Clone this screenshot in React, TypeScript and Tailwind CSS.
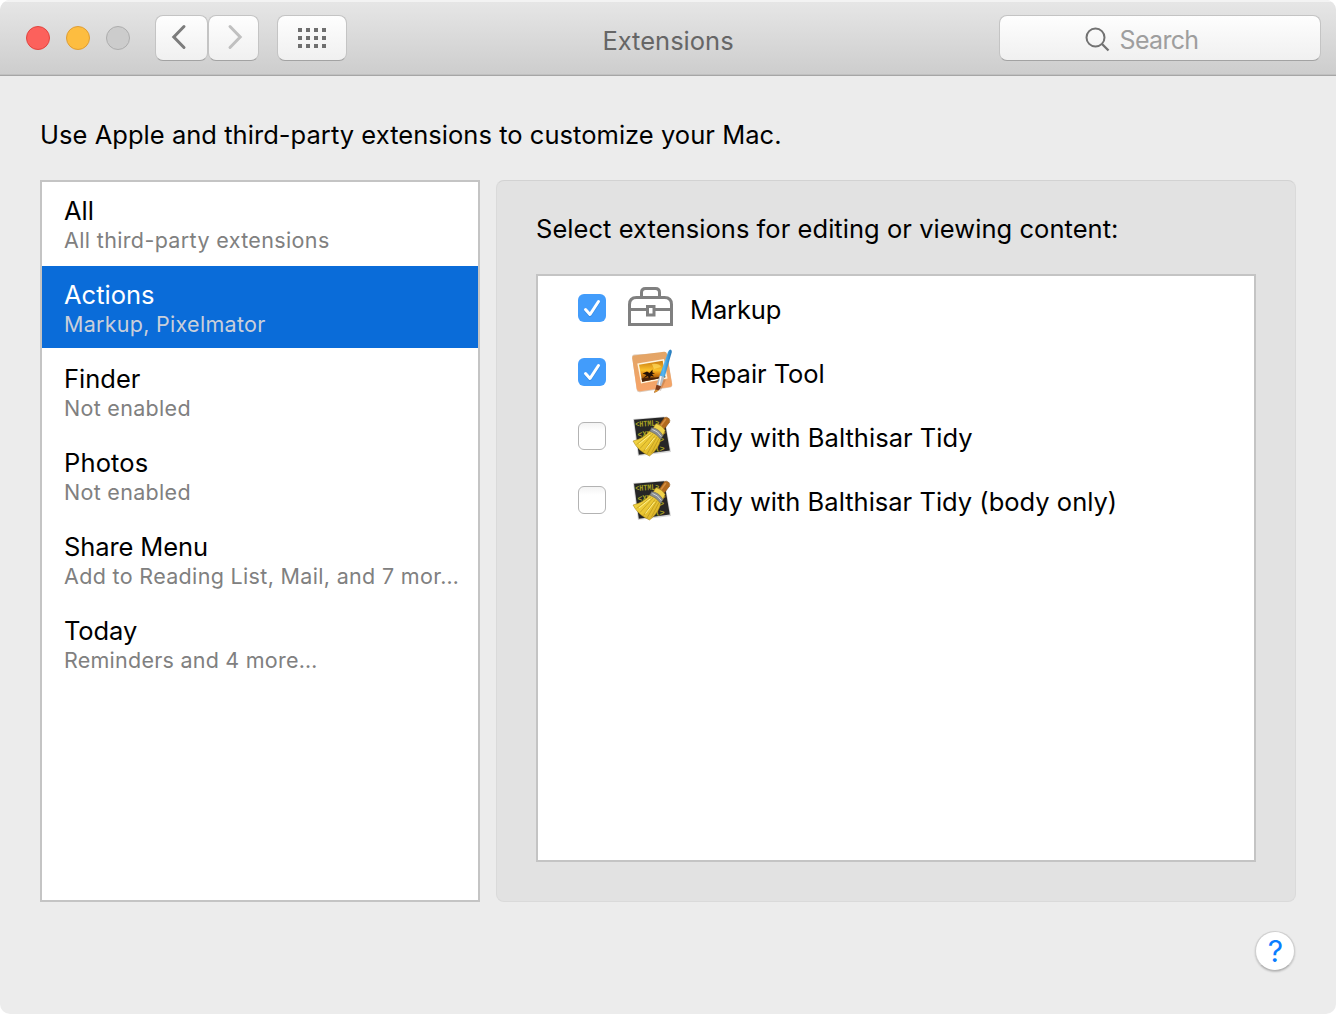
import React from 'react';

type Category = { title: string; detail: string; tt: string; dt: string; selected?: boolean };

const categories: Category[] = [
  { title: 'All', detail: 'All third-party extensions', tt: 'tracking-[0px]', dt: 'tracking-[0.36px]' },
  { title: 'Actions', detail: 'Markup, Pixelmator', tt: 'tracking-[0px]', dt: 'tracking-[0.28px]', selected: true },
  { title: 'Finder', detail: 'Not enabled', tt: 'tracking-[0px]', dt: 'tracking-[0.3px]' },
  { title: 'Photos', detail: 'Not enabled', tt: 'tracking-[0.15px]', dt: 'tracking-[0.3px]' },
  { title: 'Share Menu', detail: 'Add to Reading List, Mail, and 7 mor…', tt: 'tracking-[-0.1px]', dt: 'tracking-[0.33px]' },
  { title: 'Today', detail: 'Reminders and 4 more…', tt: 'tracking-[-0.1px]', dt: 'tracking-[0.24px]' },
];

function ToolboxIcon() {
  return (
    <svg width="46" height="44" viewBox="0 0 46 44" fill="none" stroke="#808080" strokeWidth="3">
      <path d="M13.500 10V6.500Q13.500 2.500 17.500 2.500H27.500Q31.500 2.500 31.500 6.500V10" />
      <path d="M1.500 38.500V18.500Q1.500 11.500 8.500 11.500H36.500Q43.500 11.500 43.500 18.500V38.500Z" />
      <path d="M1.500 23.500H18.500M27 23.500H43.500" />
      <rect x="19.500" y="20.500" width="6.500" height="8.500" />
    </svg>
  );
}

function PixelmatorIcon() {
  return (
    <svg width="46" height="46" viewBox="0 0 46 46">
      <defs>
        <linearGradient id="frame" x1="0" y1="0" x2="0" y2="1">
          <stop offset="0" stopColor="#e2a566" />
          <stop offset="1" stopColor="#f7a468" />
        </linearGradient>
        <linearGradient id="sunset" x1="0" y1="0" x2="0" y2="1">
          <stop offset="0" stopColor="#c97a10" />
          <stop offset="0.450" stopColor="#fbc22c" />
          <stop offset="0.620" stopColor="#e08a12" />
          <stop offset="1" stopColor="#6b2f08" />
        </linearGradient>
        <linearGradient id="brush" x1="0" y1="0" x2="1" y2="0.300">
          <stop offset="0" stopColor="#1d7fcb" />
          <stop offset="0.500" stopColor="#58b8f2" />
          <stop offset="1" stopColor="#1669ad" />
        </linearGradient>
      </defs>
      <path d="M6 5.500L36 4Q38.500 3.700 39.300 6L44.300 35.500Q44.500 38.200 42 38.600L12 43.300Q9.300 43.600 8.700 40.900L4.200 8.200Q3.900 5.800 6 5.500Z" fill="#9c6a3b" opacity="0.35" />
      <path d="M6 6.500L36 2.800Q38.500 2.500 39 5L44 35Q44.200 37.700 41.700 38L12 42.200Q9.300 42.500 8.700 39.800L4.200 9.200Q3.900 6.800 6 6.500Z" fill="url(#frame)" />
      <path d="M9.300 14.500L36 10L39.500 29.500L13 34.500Z" fill="#fff4dc" />
      <path d="M11 15.800L34.700 11.800L37.300 28.300L14.200 32.700Z" fill="url(#sunset)" />
      <path d="M24 15q7 -1 9 3l-7 2z" fill="#ffdb5c" opacity="0.7" />
      <path d="M14.200 32.700L13.600 29.500L20 28.500L28 28.500L37 26.500L37.300 28.300Z" fill="#4a2409" />
      <path d="M14.500 24.500L19 22.500L21.500 24L24.500 20.500L24.500 23.500L27 24.500L24 25L26 27.500L23 27L21 30L20 27L15 29.500L18.500 26Z" fill="#241207" />
      <path d="M35.500 30L30.500 41" stroke="#714023" strokeOpacity="0.250" strokeWidth="5" />
      <path d="M42.300 0.500Q44 0.700 43.800 3L36.500 28.500L31.600 27L40 3Q41 0.500 42.300 0.500Z" fill="url(#brush)" />
      <path d="M31.600 26.500L36.500 28L33 37.500L28.500 36Z" fill="#b8bfc6" />
      <path d="M33 27L31 36.600" stroke="#fff" strokeWidth="1.200" />
      <path d="M28.500 35.700L33 37.300Q31.500 42.500 26 43.800Q27.500 41 28.500 35.700Z" fill="#7b3c1d" />
      <path d="M27.500 40.500L30.600 41.300Q29 43.300 26 43.800Z" fill="#d99538" />
    </svg>
  );
}

function TidyIcon() {
  return (
    <svg width="46" height="46" viewBox="0 0 46 46">
      <defs>
        <linearGradient id="straw" x1="0" y1="0" x2="1" y2="1">
          <stop offset="0" stopColor="#f6de52" />
          <stop offset="0.500" stopColor="#ecc833" />
          <stop offset="1" stopColor="#d2a822" />
        </linearGradient>
      </defs>
      <path d="M5 6L36.500 3.500L43 39L10 43Z" fill="#bcbcbc" opacity="0.6" />
      <path d="M6 6.800L36 4.200L41.800 37.500L10.800 41.800Z" fill="#262626" />
      <g fill="#aaa422" fontFamily="Liberation Mono" fontWeight="700" fontSize="8.500" transform="rotate(-4 8 14)">
        <text x="7.500" y="14" textLength="24" lengthAdjust="spacingAndGlyphs">{'<HTML>'}</text>
        <text x="9" y="24.500" textLength="28" lengthAdjust="spacingAndGlyphs">{'<XML/>'}</text>
        <text x="30" y="31">{'>'}</text>
        <text x="25" y="40">{'l>'}</text>
      </g>
      <path d="M36.500 4.500Q38.500 3.500 40.500 5.200Q42.800 7.200 41.500 9.200L35.500 17L30.500 13Z" fill="#b26a1d" stroke="#7c4a14" strokeWidth="0.500" />
      <path d="M37.800 6L33 12.500" stroke="#d48f42" strokeWidth="1.500" />
      <path d="M28 10.500Q34 12 37.200 17.500L34.500 23.500L24.500 16Z" fill="#f0d24a" stroke="#8f7016" strokeWidth="0.500" />
      <path d="M22 17.500Q29 19 32.800 26Q31 36 21.500 43Q10 38 5 28Q16 25.500 22 17.500Z" fill="url(#straw)" stroke="#9c7c14" strokeWidth="0.500" />
      <path d="M23 20L8.500 31.500M25 21L12 35.500M27 22.500L15.500 38.500M29 24L19 41M31 25.500L23.500 40" stroke="#8d6a0b" strokeWidth="0.800" fill="none" opacity="0.450" />
      <path d="M22 22L11 31M26.500 25L17.500 36.500" stroke="#fff08c" strokeWidth="1" />
      <path d="M23.500 14.500Q31 15.500 35 22.500L32.800 26.500Q28 20 21.800 18.300Z" fill="#8a8e91" stroke="#505152" strokeWidth="0.500" />
      <path d="M24.500 16.500Q30 18 33.300 23.500" stroke="#cfd2d4" strokeWidth="1" fill="none" />
    </svg>
  );
}

function Checkbox({ checked }: { checked: boolean }) {
  if (!checked) {
    return (
      <span className="block h-7 w-7 rounded-[6px] border border-[#b3b3b3] bg-linear-to-b from-[#f3f3f3] via-white via-30% to-white" />
    );
  }
  return (
    <span className="block h-7 w-7 rounded-[6px] bg-[#429cfb]">
      <svg width="28" height="28" viewBox="0 0 28 28" fill="none" strokeLinecap="round" strokeLinejoin="round">
        <path d="M7.500 16.500L12 21.700L20.700 8.500" stroke="#2a7dd6" strokeOpacity="0.500" strokeWidth="3" />
        <path d="M7.500 15.500L12 20.500L20.500 7.500" stroke="#fff" strokeWidth="3" />
      </svg>
    </span>
  );
}

const extensions = [
  { name: 'Markup', checked: true, icon: <ToolboxIcon />, track: 'tracking-[-0.15px]' },
  { name: 'Repair Tool', checked: true, icon: <PixelmatorIcon />, track: 'tracking-[-0.05px]' },
  { name: 'Tidy with Balthisar Tidy', checked: false, icon: <TidyIcon />, track: 'tracking-[0.03px]' },
  { name: 'Tidy with Balthisar Tidy (body only)', checked: false, icon: <TidyIcon />, track: 'tracking-[0.01px]' },
];

const control =
  'flex h-[46px] items-center justify-center rounded-[8px] border border-[#c4c4c4] border-b-[#a3a3a3] bg-linear-to-b from-[#fefefe] to-[#f0f0f0]';

function TitleBar() {
  return (
    <header className="grid h-[76px] grid-cols-[1fr_auto_1fr] border-t-2 border-b border-t-[#f3f3f3] border-b-[#a6a6a6] bg-linear-to-b from-[#e6e6e6] to-[#cdcdcd] shadow-[inset_0_-1px_0_#c0c0c0]">
      <div className="flex pt-[13px] pl-[26px]">
        <div className="mt-[11px] flex h-6 gap-4">
          <span className="h-6 w-6 rounded-full border border-[#e2443f] bg-[#fc615c]" />
          <span className="h-6 w-6 rounded-full border border-[#df9d34] bg-[#fdbd40]" />
          <span className="h-6 w-6 rounded-full border border-[#adadad] bg-[#cccccc]" />
        </div>
        <button className={control + ' ml-[25px] w-[53px]'}>
          <svg width="51" height="44" viewBox="0 0 51 44" fill="none" stroke="#7c7c7c" strokeWidth="3" strokeLinecap="round" strokeLinejoin="miter">
            <path d="M28 10.500L17.800 21L28 31.500" />
          </svg>
        </button>
        <button className={control + ' w-[51px]'}>
          <svg width="49" height="44" viewBox="0 0 49 44" fill="none" stroke="#c0c0c0" strokeWidth="3" strokeLinecap="round" strokeLinejoin="miter">
            <path d="M21 10.500L31.200 21L21 31.500" />
          </svg>
        </button>
        <button className={control + ' ml-[18px] w-[70px]'}>
          <span className="grid grid-cols-4 gap-1">
            {Array.from({ length: 12 }, (_, i) => (
              <i key={i} className="block h-1 w-1 bg-[#6f6f6f]" />
            ))}
          </span>
        </button>
      </div>
      <h1 className="pt-[23px] text-[25.5px] leading-[32px] tracking-[0px] text-[#666666]">Extensions</h1>
      <div className="flex justify-end pt-[13px] pr-[15px]">
        <div className={control + ' w-[322px] pr-[38px]'}>
          <svg width="26" height="26" viewBox="0 0 26 26" fill="none" stroke="#727272" strokeWidth="2" className="mt-[3px] mr-[9px] ml-[1px]">
            <circle cx="10.500" cy="10.500" r="9" />
            <path d="M17 17L23.500 23.500" strokeWidth="2.300" />
          </svg>
          <span className="pt-[3px] text-[25px] leading-[32px] tracking-[-0.7px] text-[#9e9e9e]">Search</span>
        </div>
      </div>
    </header>
  );
}

export default function App() {
  return (
    <div className="h-[1014px] w-[1336px] bg-white">
      <div className="h-full overflow-hidden rounded-[10px] bg-[#ececec] font-[Inter,sans-serif] text-black">
        <TitleBar />
        <main className="px-10 pt-[43px]">
          <p className="h-[61px] text-[25.5px] leading-8 tracking-[0.04px] whitespace-nowrap">
            Use Apple and third-party extensions to customize your Mac.
          </p>
          <div className="flex h-[722px] gap-4">
            <nav className="flex w-[440px] flex-col gap-[2px] border-2 border-[#c4c4c4] bg-white">
              {categories.map((c) => (
                <div key={c.title} className={'h-[82px] pt-[14px] pl-[22px] whitespace-nowrap ' + (c.selected ? 'bg-[#0a6cd9] text-white' : '')}>
                  <div className={'text-[25.5px] leading-[30px] ' + c.tt}>{c.title}</div>
                  <div className={'text-[21.5px] leading-7 ' + c.dt + (c.selected ? ' text-[#c9cfda]' : ' text-[#808080]')}>{c.detail}</div>
                </div>
              ))}
            </nav>
            <section className="w-[800px] rounded-[8px] border border-[#dadada] border-t-[#d2d2d2] bg-[#e2e2e2] px-[39px] pt-8">
              <h2 className="h-[61px] text-[25.5px] leading-8 tracking-[0.05px] whitespace-nowrap">
                Select extensions for editing or viewing content:
              </h2>
              <ul className="h-[588px] border-2 border-[#c4c4c4] bg-white">
                {extensions.map((e) => (
                  <li key={e.name} className="flex h-16 items-center pl-10">
                    <Checkbox checked={e.checked} />
                    <span className="ml-[22px] flex w-[46px] justify-center">{e.icon}</span>
                    <span className={'ml-4 pt-1 text-[25.5px] leading-8 whitespace-nowrap ' + e.track}>{e.name}</span>
                  </li>
                ))}
              </ul>
            </section>
          </div>
          <footer className="flex justify-end pt-[29px] pr-px">
            <button className="flex h-10 w-10 items-center justify-center rounded-full border border-[#cfcfcf] border-b-[#b5b5b5] bg-white pl-px text-[30px] text-[#0a7dff] shadow-[0_1px_2px_rgba(0,0,0,0.2)]">
              ?
            </button>
          </footer>
        </main>
      </div>
    </div>
  );
}
